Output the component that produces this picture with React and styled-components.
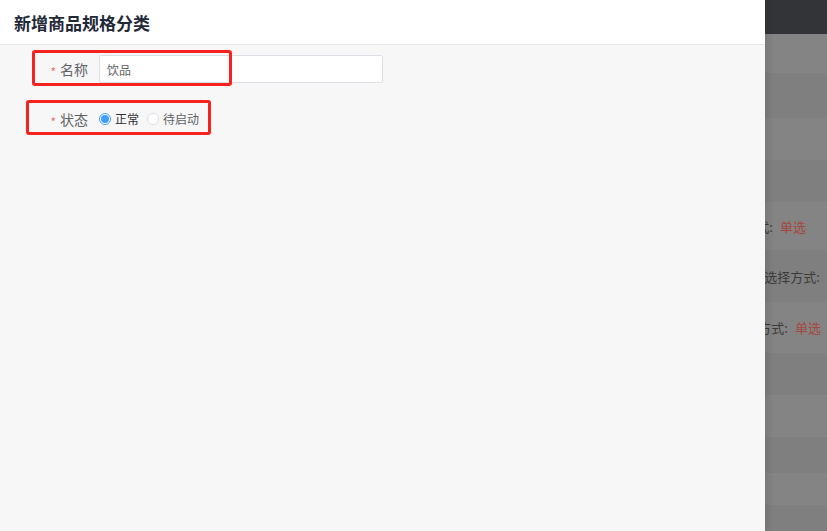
import React from "react";
import styled, { createGlobalStyle } from "styled-components";

const GlobalStyle = createGlobalStyle`
  html, body {
    margin: 0;
    padding: 0;
    height: 100%;
    overflow: hidden;
  }
  body {
    font-family: "Noto Sans CJK SC", "Noto Sans", sans-serif;
  }
  #root {
    height: 100%;
  }
`;

const Screen = styled.div`
  display: flex;
  width: 827px;
  height: 531px;
  overflow: hidden;
`;

const Drawer = styled.div`
  position: relative;
  z-index: 2;
  width: 765px;
  flex-shrink: 0;
  display: flex;
  flex-direction: column;
  background: #f7f7f7;
  box-shadow: 2px 0 8px rgba(0, 0, 0, 0.12);
`;

const DrawerHeader = styled.div`
  height: 45px;
  box-sizing: border-box;
  display: flex;
  align-items: center;
  padding: 0 14px;
  background: #ffffff;
  border-bottom: 1px solid #e6e6e6;
`;

const Title = styled.h2`
  margin: 0;
  font-size: 17px;
  font-weight: 700;
  color: #1f2937;
  line-height: 1;
`;

const FormBody = styled.div`
  position: relative;
  padding-top: 10px;
`;

const FormItem = styled.div`
  display: flex;
  align-items: center;
  height: 28px;
  margin-bottom: ${(p) => p.$gap || 0}px;
`;

const Label = styled.label`
  width: 80px;
  box-sizing: border-box;
  padding-right: 11px;
  margin-left: 19px;
  font-size: 14px;
  color: #606266;
  display: flex;
  justify-content: flex-end;
  align-items: center;
  padding-top: ${(p) => p.$drop || 0}px;

  &::before {
    content: "*";
    color: #f56c6c;
    margin-right: 4px;
    font-size: 12px;
    position: relative;
    top: 2px;
  }
`;

const Input = styled.input`
  width: 284px;
  height: 28px;
  box-sizing: border-box;
  border: 1px solid #dcdfe6;
  border-radius: 2px;
  background: #ffffff;
  padding: 0 7px;
  font-family: inherit;
  font-size: 12px;
  color: #606266;
  outline: none;
`;

const RadioGroup = styled.div`
  display: flex;
  align-items: center;
  gap: 8px;
  padding-top: 3px;
`;

const RadioOption = styled.label`
  display: flex;
  align-items: center;
  gap: 4px;
  font-size: 12px;
  color: ${(p) => (p.$checked ? "#303133" : "#606266")};
`;

const RadioDot = styled.span`
  width: 12px;
  height: 12px;
  box-sizing: border-box;
  border-radius: 50%;
  border: 1px solid ${(p) => (p.$checked ? "#409eff" : "#dcdfe6")};
  background: #ffffff;
  display: flex;
  align-items: center;
  justify-content: center;

  &::after {
    content: "";
    width: 8px;
    height: 8px;
    border-radius: 50%;
    background: ${(p) => (p.$checked ? "#409eff" : "transparent")};
  }
`;

const Marker = styled.div`
  position: absolute;
  left: ${(p) => p.$x}px;
  top: ${(p) => p.$y}px;
  width: ${(p) => p.$w}px;
  height: ${(p) => p.$h}px;
  box-sizing: border-box;
  border: 3px solid #f5221f;
  border-radius: 3px;
  pointer-events: none;
`;

const Backdrop = styled.div`
  flex: 1;
  display: flex;
  flex-direction: column;
  overflow: hidden;
  background: #808080;
`;

const TopBar = styled.div`
  height: 34px;
  flex-shrink: 0;
  background: #333438;
`;

const Row = styled.div`
  height: ${(p) => p.$h}px;
  flex-shrink: 0;
  display: flex;
  align-items: center;
  justify-content: flex-end;
  background: ${(p) => (p.$light ? "#848484" : "#7f7f7f")};
  white-space: nowrap;
  font-size: 13px;
  color: #3b3b3b;
  padding-right: ${(p) => p.$pr || 0}px;
`;

const Clip = styled.span`
  margin-right: ${(p) => p.$mr || 0}px;
`;

const Pick = styled.span`
  color: #a4473d;
  margin-left: 7px;
`;

const rows = [
  { h: 39, light: true },
  { h: 45 },
  { h: 42, light: true },
  { h: 42 },
  { h: 48, light: true, text: "选择方式:", pick: "单选", pr: 21 },
  { h: 52, text: "选择方式:", pick: "单选", mr: -26 },
  { h: 51, light: true, text: "选择方式:", pick: "单选", pr: 6 },
  { h: 42 },
  { h: 42, light: true },
  { h: 36 },
  { h: 32, light: true },
  { h: 26 },
];

export default function App() {
  return (
    <>
      <GlobalStyle />
      <Screen>
        <Drawer>
          <DrawerHeader>
            <Title>新增商品规格分类</Title>
          </DrawerHeader>
          <FormBody>
            <FormItem $gap={20}>
              <Label>名称</Label>
              <Input defaultValue="饮品" />
            </FormItem>
            <FormItem>
              <Label $drop={4}>状态</Label>
              <RadioGroup>
                <RadioOption $checked>
                  <RadioDot $checked />
                  正常
                </RadioOption>
                <RadioOption>
                  <RadioDot />
                  待启动
                </RadioOption>
              </RadioGroup>
            </FormItem>
            <Marker $x={32} $y={5} $w={200} $h={36} />
            <Marker $x={26} $y={55} $w={185} $h={35} />
          </FormBody>
        </Drawer>
        <Backdrop>
          <TopBar />
          {rows.map((r, i) => (
            <Row key={i} $h={r.h} $light={r.light} $pr={r.pr}>
              {r.text && (
                <Clip $mr={r.mr}>
                  {r.text}
                  <Pick>{r.pick}</Pick>
                </Clip>
              )}
            </Row>
          ))}
        </Backdrop>
      </Screen>
    </>
  );
}
